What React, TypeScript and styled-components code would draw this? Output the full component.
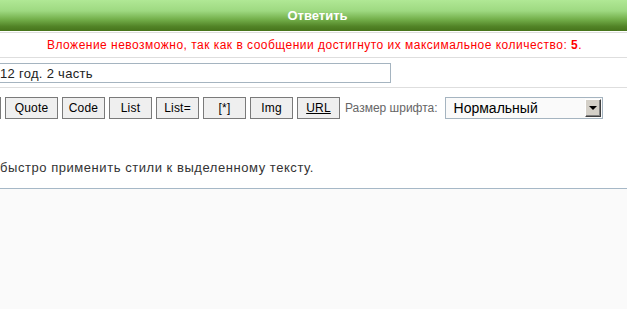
import React from 'react';
import styled, { createGlobalStyle } from 'styled-components';

const GlobalStyle = createGlobalStyle`
  html, body {
    margin: 0;
    padding: 0;
    background: #ffffff;
    overflow: hidden;
  }

  body {
    font-family: "Liberation Sans", Arial, sans-serif;
    font-size: 12px;
    color: #333333;
  }
`;

const Page = styled.div`
  width: 627px;
  height: 309px;
  display: flex;
  flex-direction: column;
  overflow: hidden;
`;

const Header = styled.div`
  height: 31px;
  flex-shrink: 0;
  display: flex;
  align-items: center;
  justify-content: center;
  padding-left: 8px;
  background: linear-gradient(
    to bottom,
    #b0e895 0%,
    #9ed981 35%,
    #74b04b 62%,
    #528427 85%,
    #46741b 100%
  );
  color: #ffffff;
  font-size: 13px;
  font-weight: bold;
  margin-bottom: 1px;
`;

const Row = styled.div<{ $height?: number }>`
  border-top: 1px solid #dedede;
  flex-shrink: 0;
  ${props => (props.$height ? `height: ${props.$height}px;` : '')}
`;

const Notice = styled(Row)`
  display: flex;
  align-items: center;
  justify-content: center;
  padding-left: 2px;
  color: #ff0000;
  font-size: 12px;
  letter-spacing: 0.48px;

  b {
    font-weight: bold;
  }
`;

const SubjectRow = styled(Row)`
  padding-top: 5px;
  box-sizing: border-box;
`;

const SubjectInput = styled.input`
  display: block;
  box-sizing: border-box;
  width: 421px;
  height: 20px;
  margin-left: -30px;
  padding: 0 0 0 29px;
  border: 1px solid #a5b4c0;
  background: #ffffff;
  font-family: "Liberation Sans", Arial, sans-serif;
  font-size: 13px;
  letter-spacing: 0.3px;
  color: #222222;
  outline: none;
`;

const EditorRow = styled(Row)`
  flex: 1;
  display: flex;
  flex-direction: column;
  padding-top: 9px;
`;

const Toolbar = styled.div`
  display: flex;
  align-items: center;
  gap: 4px;
  margin-left: -41px;
`;

const TagButton = styled.button<{ $width?: number; $underline?: boolean }>`
  box-sizing: border-box;
  width: ${props => props.$width ?? 43}px;
  height: 22px;
  padding: 0;
  border: 1px solid #7a7a7a;
  background: #efefef;
  font-family: "Liberation Sans", Arial, sans-serif;
  font-size: 12px;
  letter-spacing: 0.2px;
  color: #000000;
  text-decoration: ${props => (props.$underline ? 'underline' : 'none')};
  cursor: pointer;
`;

const SizeLabel = styled.span`
  margin-left: 1px;
  color: #666666;
  font-size: 12px;
`;

const SelectBox = styled.div`
  box-sizing: border-box;
  width: 158px;
  height: 22px;
  margin-left: 3px;
  display: flex;
  align-items: center;
  justify-content: space-between;
  padding: 0 1px 0 8px;
  border: 1px solid #a5b4c0;
  background: #fafafa;
  font-size: 14px;
  color: #000000;
`;

const ArrowButton = styled.span`
  box-sizing: border-box;
  width: 16px;
  height: 18px;
  display: flex;
  align-items: center;
  justify-content: center;
  background: #d4d0c8;
  border-top: 1px solid #ffffff;
  border-left: 1px solid #ffffff;
  border-right: 1px solid #404040;
  border-bottom: 1px solid #404040;
  box-shadow: inset -1px -1px 0 #808080;

  &::after {
    content: '';
    width: 0;
    height: 0;
    border-left: 4px solid transparent;
    border-right: 4px solid transparent;
    border-top: 4px solid #000000;
  }
`;

const HelpLine = styled.div`
  margin-top: 42px;
  height: 14px;
  line-height: 14px;
  font-size: 13px;
  letter-spacing: 0.55px;
  color: #333333;
`;

const TextArea = styled.div`
  flex: 1;
  margin-top: 13px;
  border-top: 1px solid #a6b8c7;
  background: #fafafa;
`;

const tags: { key: string; label: string; width?: number; underline?: boolean }[] = [
  { key: 'u', label: '', width: 42 },
  { key: 'quote', label: 'Quote', width: 53 },
  { key: 'code', label: 'Code' },
  { key: 'list', label: 'List' },
  { key: 'list-ordered', label: 'List=' },
  { key: 'item', label: '[*]' },
  { key: 'img', label: 'Img' },
  { key: 'url', label: 'URL', underline: true },
];

const App: React.FC = () => {
  return (
    <>
      <GlobalStyle />
      <Page>
        <Header>Ответить</Header>

        <Notice $height={24}>
          <span>
            Вложение невозможно, так как в сообщении достигнуто их максимальное количество: <b>5</b>.
          </span>
        </Notice>

        <SubjectRow $height={30}>
          <SubjectInput defaultValue="12 год. 2 часть" />
        </SubjectRow>

        <EditorRow>
          <Toolbar>
            {tags.map(tag => (
              <TagButton
                key={tag.key}
                aria-label={tag.key}
                $width={tag.width}
                $underline={tag.underline}
              >
                {tag.label}
              </TagButton>
            ))}
            <SizeLabel>Размер шрифта:</SizeLabel>
            <SelectBox>
              <span>Нормальный</span>
              <ArrowButton />
            </SelectBox>
          </Toolbar>

          <HelpLine>быстро применить стили к выделенному тексту.</HelpLine>

          <TextArea />
        </EditorRow>
      </Page>
    </>
  );
};

export default App;
